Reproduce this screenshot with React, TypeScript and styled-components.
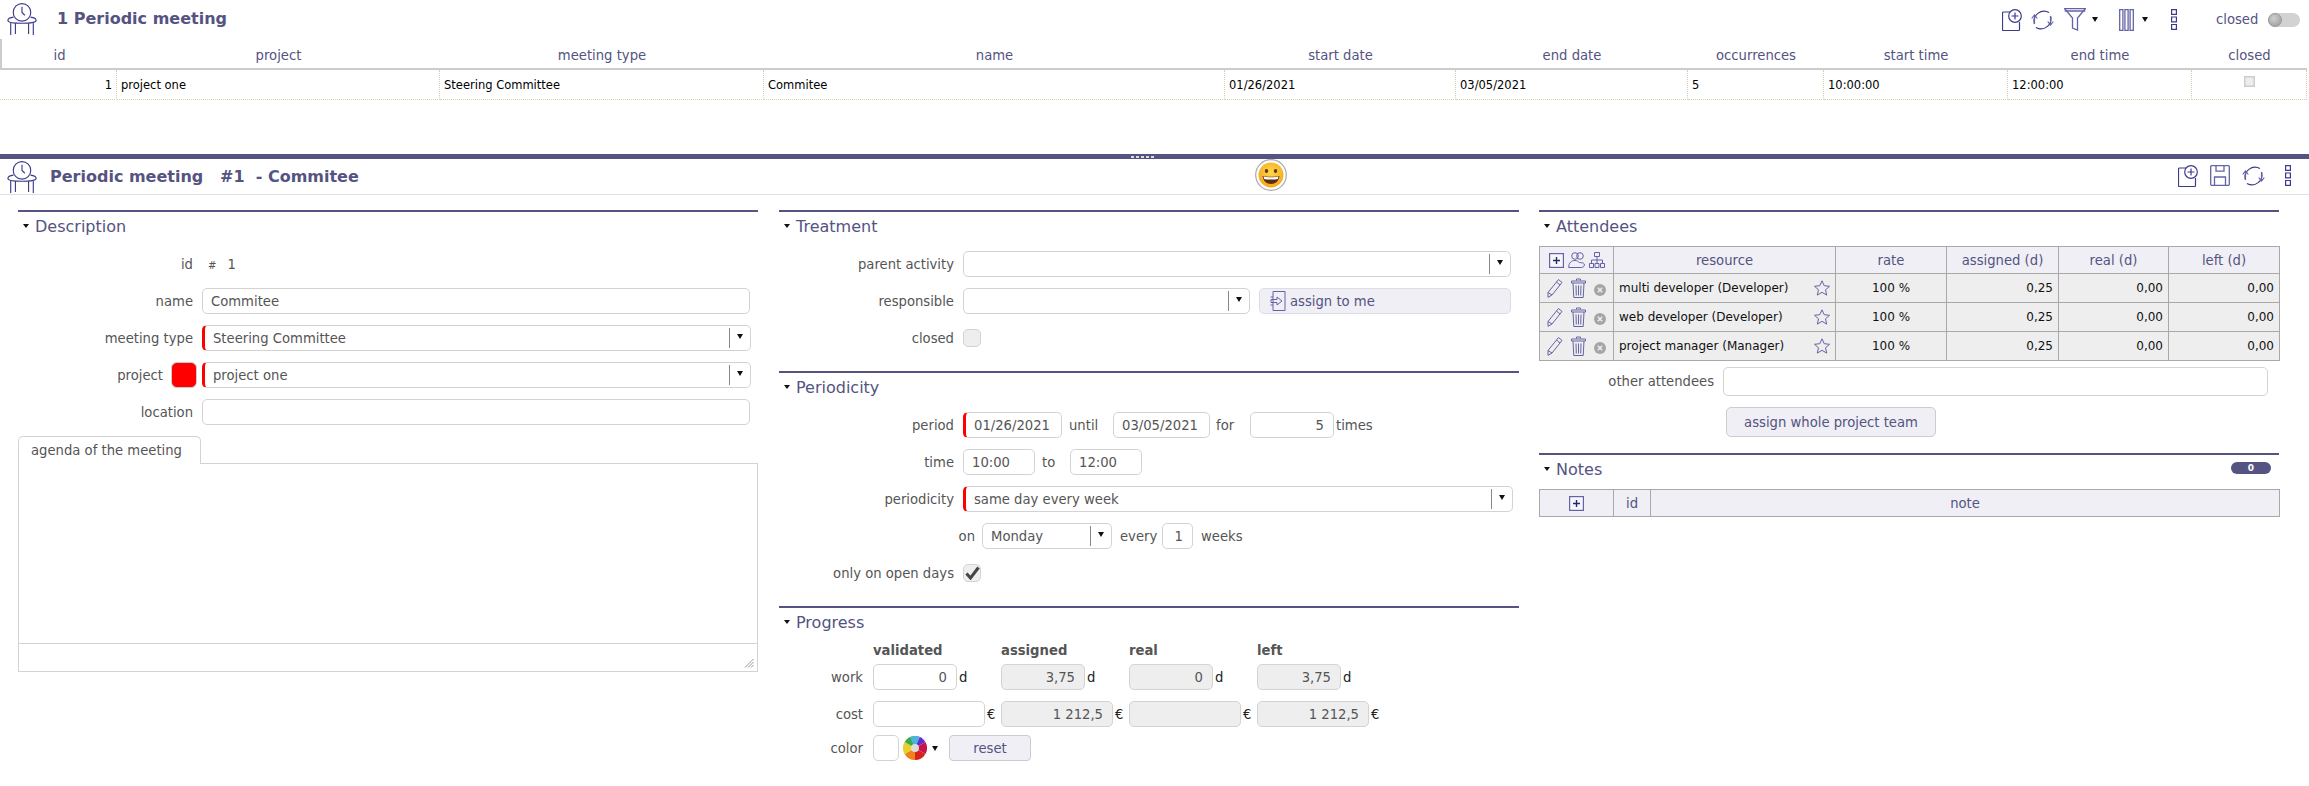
import React from "react";
import styled, { createGlobalStyle } from "styled-components";

const NAVY = "#545381";
const INK = "#3c3a8c";
const FONT = `"DejaVu Sans", Verdana, sans-serif`;
const TEXT = "13.2px";

const Global = createGlobalStyle`
  html, body { margin: 0; padding: 0; width: 2309px; height: 786px; overflow: hidden; background: #fff; }
  body { font-family: ${FONT}; font-size: ${TEXT}; color: #555; }
  * { box-sizing: border-box; }
`;

const Page = styled.div`
  width: 2309px;
  height: 786px;
  display: flex;
  flex-direction: column;
`;
const ListPane = styled.section`
  height: 154px;
  flex: none;
`;
const Splitter = styled.div`
  height: 5px;
  flex: none;
  background: ${NAVY};
  display: flex;
  justify-content: center;
  align-items: center;
  gap: 2px;
  padding-right: 25px;
`;
const SplitDot = styled.i`
  width: 3px;
  height: 2px;
  background: #ddd;
`;
const TitleBar = styled.header`
  height: 39px;
  display: flex;
  align-items: center;
`;
const ListTitle = styled.h1`
  margin: -3px 0 0 19px;
  font: bold 16px ${FONT};
  color: ${NAVY};
`;
const BrandSlot = styled.div`
  width: 38px;
  height: 39px;
  padding: 3px 0 0 6px;
  flex: none;
`;
const Tools = styled.div`
  margin-left: auto;
  display: flex;
  align-items: center;
`;
const ToolSlot = styled.span<{ $ml: number }>`
  display: flex;
  align-items: center;
  margin-left: ${(p) => p.$ml}px;
`;
const ClosedLabel = styled.span`
  width: 41px;
  margin-left: 39px;
  font-size: ${TEXT};
  color: ${NAVY};
`;
const Toggle = styled.span`
  display: block;
  width: 32px;
  height: 14px;
  margin: 0 9px 0 11px;
  border-radius: 7px;
  background: #d2d2d2;
`;
const Knob = styled.span`
  display: block;
  width: 14px;
  height: 14px;
  border-radius: 50%;
  border: 1px solid #999;
  background: radial-gradient(circle at 40% 35%, #cfcfcf, #999);
`;
const Grid = styled.table`
  border-collapse: separate;
  border-spacing: 0;
  table-layout: fixed;
  width: 2307px;
`;
const Col = styled.col<{ $w: number }>`
  width: ${(p) => p.$w}px;
`;
const GridHead = styled.th`
  height: 31px;
  padding: 4px 0 0;
  font: normal ${TEXT} ${FONT};
  color: ${NAVY};
  text-align: center;
  border-bottom: 2px solid #ccc;
  &:first-child { border-left: 2px solid #ccc; }
`;
const GridCell = styled.td<{ $right?: boolean; $center?: boolean }>`
  height: 30px;
  padding: 1px 4px 0;
  font-size: 11.5px;
  color: #000;
  text-align: ${(p) => (p.$right ? "right" : p.$center ? "center" : "left")};
  border-bottom: 1px dotted #d9cdb0;
  border-right: 1px dotted #d9cdb0;
`;
const MiniCheck = styled.span`
  display: inline-block;
  width: 11px;
  height: 11px;
  margin-bottom: 4px;
  background: #eee;
  border: 1px solid #ccc;
  box-shadow: inset 0 0 2px #bbb;
`;
const DetailPane = styled.section`
  flex: 1;
`;
const DetailBar = styled.header`
  height: 36px;
  display: grid;
  grid-template-columns: 1255px 32px 1fr;
  align-items: center;
  border-bottom: 1px solid #e0dfe8;
`;
const DetailHead = styled.div`
  display: flex;
  align-items: center;
`;
const DetailSlot = styled.div`
  width: 50px;
  height: 35px;
  flex: none;
  padding: 2px 0 0 6px;
`;
const DetailTitle = styled.h1`
  margin: 0;
  font: bold 16px ${FONT};
  color: ${NAVY};
  white-space: pre;
`;
const FaceSlot = styled.div`
  height: 32px;
  align-self: start;
`;
const DetailTools = styled.div`
  display: flex;
  justify-content: flex-end;
  align-items: center;
  padding: 0 18px 2px 0;
`;
const Columns = styled.div`
  display: grid;
  grid-template-columns: 761px 760px 740px;
  padding: 15px 0 0 18px;
  align-items: start;
`;
const Column = styled.div<{ $gap?: number }>`
  width: 740px;
  display: flex;
  flex-direction: column;
  gap: ${(p) => p.$gap ?? 20}px;
`;
const Section = styled.section`
  border-top: 2px solid ${NAVY};
`;
const SectionHead = styled.div`
  height: 28px;
  display: flex;
  align-items: center;
  padding-left: 5px;
  font-size: 16px;
  color: ${NAVY};
`;
const Caret = styled.i`
  display: block;
  width: 0;
  height: 0;
  margin-right: 6px;
  border-left: 3px solid transparent;
  border-right: 3px solid transparent;
  border-top: 4px solid #111;
`;
const BareCaret = styled.i`
  display: block;
  width: 0;
  height: 0;
  border-left: 3.5px solid transparent;
  border-right: 3.5px solid transparent;
  border-top: 5px solid #111;
`;
const Badge = styled.span`
  margin: -2px 8px 0 auto;
  width: 40px;
  height: 12px;
  border-radius: 6px;
  background: ${NAVY};
  color: #fff;
  font: bold 9px/12px ${FONT};
  text-align: center;
`;
const FormBody = styled.div`
  display: flex;
  flex-direction: column;
  gap: 11px;
  padding-top: 11px;
`;
const FormRow = styled.div`
  display: flex;
  align-items: center;
  min-height: 26px;
`;
const Label = styled.label`
  width: 175px;
  margin-right: 9px;
  flex: none;
  text-align: right;
  font-size: ${TEXT};
  color: #555;
`;
const ProjectLabel = styled(Label)`
  width: 145px;
  margin-right: 8px;
`;
const OnLabel = styled(Label)`
  width: 196px;
  margin-right: 7px;
`;
const Swatch = styled.span`
  width: 26px;
  height: 26px;
  margin-right: 5px;
  flex: none;
  background: #f00;
  border: 1px solid #ccc;
  border-radius: 6px;
`;
const Field = styled.div<{ $w?: number; $req?: boolean; $off?: boolean; $right?: boolean; $h?: number }>`
  width: ${(p) => (p.$w ? `${p.$w}px` : "auto")};
  height: ${(p) => p.$h ?? 26}px;
  flex: none;
  display: flex;
  align-items: center;
  justify-content: ${(p) => (p.$right ? "flex-end" : "flex-start")};
  padding: 0 ${(p) => (p.$right ? 9 : 8)}px;
  background: ${(p) => (p.$off ? "#eee" : "#fff")};
  border: 1px solid #d3d3d3;
  border-left: ${(p) => (p.$req ? "3px solid #f00" : "1px solid #d3d3d3")};
  border-radius: 5px;
  font-size: ${TEXT};
  color: #555;
`;
const SelectArrow = styled.span`
  margin-left: auto;
  margin-right: -8px;
  width: 21px;
  height: 20px;
  flex: none;
  display: flex;
  justify-content: center;
  padding-top: 6px;
  border-left: 1px solid #888;
`;
const Note = styled.span<{ $w?: number; $pl?: number }>`
  width: ${(p) => (p.$w ? `${p.$w}px` : "auto")};
  padding-left: ${(p) => p.$pl ?? 0}px;
  font-size: ${TEXT};
  color: #555;
  flex: none;
`;
const IdValue = styled.span`
  color: #555;
  font-size: ${TEXT};
  padding-left: 6px;
`;
const Hash = styled.span`
  font-size: 10px;
  margin-right: 11px;
`;
const CheckBox = styled.span`
  width: 18px;
  height: 18px;
  display: flex;
  align-items: center;
  justify-content: center;
  background: #eee;
  border: 1px solid #d3d3d3;
  border-radius: 5px;
`;
const AssignButton = styled.div`
  width: 252px;
  height: 26px;
  margin-left: 9px;
  padding-left: 10px;
  display: flex;
  align-items: center;
  gap: 4px;
  background: #efeff5;
  border: 1px solid #dcdce4;
  border-radius: 5px;
  color: ${NAVY};
  font-size: ${TEXT};
`;
const Tab = styled.div`
  width: 183px;
  height: 28px;
  margin-bottom: -1px;
  padding-left: 12px;
  display: flex;
  align-items: center;
  background: #fff;
  border: 1px solid #d3d3d3;
  border-bottom: none;
  border-radius: 5px 5px 0 0;
  position: relative;
  z-index: 1;
  font-size: ${TEXT};
  color: #555;
`;
const EditorBox = styled.div`
  height: 209px;
  display: flex;
  flex-direction: column;
  border: 1px solid #d3d3d3;
`;
const EditorArea = styled.div`
  flex: 1;
`;
const EditorFoot = styled.div`
  height: 28px;
  display: flex;
  align-items: flex-end;
  justify-content: flex-end;
  padding: 0 3px 3px 0;
  border-top: 1px solid #d3d3d3;
`;
const TabGroup = styled.div`
  display: flex;
  flex-direction: column;
`;
const ProgressRow = styled.div<{ $mt?: number }>`
  display: grid;
  grid-template-columns: 94px repeat(4, 128px);
  align-items: center;
  margin-top: ${(p) => p.$mt ?? 0}px;
`;
const ProgressHead = styled.b`
  font-size: ${TEXT};
  color: #555;
  height: 21px;
`;
const ProgressLabel = styled.span`
  padding-right: 10px;
  text-align: right;
  font-size: ${TEXT};
  color: #555;
`;
const Amount = styled.span`
  display: flex;
  align-items: center;
`;
const Unit = styled.span`
  margin-left: 2px;
  color: #222;
  font-size: ${TEXT};
`;
const ColorRow = styled.div`
  display: flex;
  align-items: center;
  margin-top: 8px;
`;
const ColorLabel = styled(ProgressLabel)`
  width: 94px;
`;
const ResetButton = styled.div`
  width: 82px;
  height: 26px;
  margin-left: 11px;
  display: flex;
  align-items: center;
  justify-content: center;
  background: #efeff5;
  border: 1px solid #ccc;
  border-radius: 4px;
  color: ${NAVY};
  font-size: ${TEXT};
`;
const ProgressBlock = styled.div`
  padding-top: 7px;
`;
const DataTable = styled.table`
  border-collapse: collapse;
  table-layout: fixed;
  width: 740px;
  margin-top: 6px;
`;
const DataHead = styled.th`
  height: 27px;
  padding: 0;
  background: #efeff5;
  border: 1px solid #a9a9a9;
  font: normal ${TEXT} ${FONT};
  color: ${NAVY};
`;
const DataCell = styled.td<{ $align?: string }>`
  height: 29px;
  padding: 0 5px;
  background: #eee;
  border: 1px solid #a9a9a9;
  font-size: 12px;
  color: #111;
  text-align: ${(p) => p.$align ?? "left"};
`;
const IconRow = styled.div`
  display: flex;
  align-items: center;
  justify-content: center;
  gap: 4px;
`;
const ActionRow = styled(IconRow)`
  gap: 8px;
`;
const ResourceCell = styled.div`
  display: flex;
  align-items: center;
  justify-content: space-between;
`;
const OtherButton = styled.div`
  width: 210px;
  height: 30px;
  margin: 11px 0 0 187px;
  display: flex;
  align-items: center;
  justify-content: center;
  background: #efeff5;
  border: 1px solid #ccc;
  border-radius: 5px;
  color: ${NAVY};
  font-size: ${TEXT};
`;
const OtherRow = styled(FormRow)`
  margin-top: 6px;
`;
const Glyph = styled.svg`
  display: block;
  flex: none;
  fill: none;
  stroke: ${INK};
  stroke-width: 1.2;
`;
const PaleGlyph = styled(Glyph)`
  stroke: #6463a5;
  stroke-width: 1;
`;
const HeavyGlyph = styled(PaleGlyph)`
  stroke-width: 1.3;
`;
const RemoveGlyph = styled.svg`
  display: block;
  flex: none;
  margin-top: 4px;
`;
const WheelGlyph = styled.svg`
  display: block;
  flex: none;
  margin-left: 4px;
`;

const Furniture = () => (
  <Glyph width="32" height="32" viewBox="0 0 32 34">
    <circle cx="16" cy="10" r="9.3" />
    <path d="M16 4v6l3 3" />
    <path d="M7 15C3 15.5 1 17 1 18.5 1 20.5 7 21.5 16 21.5s15-1 15-3c0-1.500-2-3-6-3.500" />
    <path d="M4 20.500V34M9 21.500V33M23 21.500V33M28 20.500V34" />
  </Glyph>
);
const NewDoc = () => (
  <Glyph width="20" height="22" viewBox="0 0 20 22">
    <path d="M8 3H1.500a1 1 0 0 0-1 1v16.500a1 1 0 0 0 1 1h15a1 1 0 0 0 1-1V13" />
    <circle cx="13" cy="7" r="6.300" fill="#fff" />
    <path d="M13 3.500v7M9.500 7h7" />
  </Glyph>
);
const Refresh = () => (
  <Glyph width="23" height="22" viewBox="0 0 23 22" strokeWidth="1.4">
    <path d="M3.500 15A10 10 0 0 1 18 3.500M19.500 7A10 10 0 0 1 5 18.500" />
    <path d="M.7 9.500L3.500 6l2.800 3.500M3.500 6v9M16.700 12.500l2.800 3.500 2.800-3.500M19.500 16V7" stroke="#6463a5" />
  </Glyph>
);
const Funnel = () => (
  <HeavyGlyph width="22" height="23" viewBox="0 0 22 23">
    <path d="M.7.700h20.600L13.500 10v12l-5-2V10zM.7 3h20.600" />
  </HeavyGlyph>
);
const ColumnsIcon = () => (
  <HeavyGlyph width="15" height="22" viewBox="0 0 15 22">
    <path d="M.7.700h3.200v20.600H.700zM5.900.700h3.200v20.600H5.900zM11.100.700h3.200v20.600h-3.200z" />
  </HeavyGlyph>
);
const Dots = () => (
  <Glyph width="6" height="21" viewBox="0 0 6 21">
    <path d="M.6.600h4.800v4.800H.6zM.6 8h4.800v4.800H.6zM.6 15.500h4.800v4.800H.6z" />
  </Glyph>
);
const SaveIcon = () => (
  <HeavyGlyph width="20" height="21" viewBox="0 0 20 21">
    <path d="M1.700.700h16.600a1 1 0 0 1 1 1v17.600a1 1 0 0 1-1 1H1.700a1 1 0 0 1-1-1V1.700a1 1 0 0 1 1-1z" />
    <path d="M6 .7v5.500h8V.700M4.500 20v-8h11v8" />
  </HeavyGlyph>
);
const Smiley = () => (
  <svg width="32" height="32" viewBox="0 0 32 32">
    <defs>
      <radialGradient id="face" cx="50%" cy="40%" r="60%">
        <stop offset="0%" stopColor="#ffd84a" />
        <stop offset="100%" stopColor="#f5a81c" />
      </radialGradient>
    </defs>
    <circle cx="16" cy="16" r="15.300" fill="#fff" stroke="#aaa" strokeWidth="1.200" />
    <circle cx="16" cy="16" r="12.500" fill="url(#face)" />
    <ellipse cx="11.500" cy="12" rx="1.700" ry="1.900" fill="#5b3a12" />
    <ellipse cx="20.500" cy="12" rx="1.700" ry="1.900" fill="#5b3a12" />
    <path d="M7.500 17c3 1 14 1 17 0-.6 5-4 8-8.500 8s-7.900-3-8.500-8z" fill="#5d2c0d" />
    <path d="M8.500 17.500c3 .9 12 .9 15 0l-.5 2.500c-3 .8-11 .8-14 0z" fill="#fff" />
  </svg>
);
const AssignGlyph = () => (
  <PaleGlyph width="16" height="20" viewBox="0 0 16 20">
    <path d="M3 .5h12v19H3zM3 6H.5M3 14H.5" />
    <path d="M1 8.500h6V6l5 4-5 4v-2.500H1z" />
  </PaleGlyph>
);
const Check = () => (
  <svg width="15" height="14" viewBox="0 0 15 14">
    <path d="M1.500 7.500l4 4.500L13.500 1.500" fill="none" stroke="#444" strokeWidth="3" />
  </svg>
);
const PlusBox = () => (
  <Glyph width="15" height="15" viewBox="0 0 15 15">
    <rect x=".6" y=".6" width="13.800" height="13.800" fill="#f7f7fb" stroke="#6463a5" />
    <path d="M7.500 4v7M4 7.500h7" stroke="#222a6e" strokeWidth="1.400" />
  </Glyph>
);
const People = () => (
  <PaleGlyph width="17" height="16" viewBox="0 0 17 16">
    <circle cx="7" cy="4" r="3.300" />
    <circle cx="12" cy="4" r="3.300" />
    <path d="M.7 15.500c0-5 3-7 6.300-7 2 0 3 1 4.500 2 2 .5 4 0 4.800 1.500.4 2-1 3.500-3 3.500z" />
  </PaleGlyph>
);
const Hierarchy = () => (
  <PaleGlyph width="16" height="16" viewBox="0 0 16 16">
    <path d="M5.500.5h5v4h-5zM.5 11.500h4v4h-4zM6 11.500h4v4H6zM11.500 11.500h4v4h-4zM8 4.500v7M2.500 11.500V8h11v3.500" />
  </PaleGlyph>
);
const PencilIcon = () => (
  <PaleGlyph width="16" height="20" viewBox="0 0 16 20">
    <path d="M11.500 1.500l3.500 3L5 17l-4 2.300L1 14.500zM9.500 4l3.500 3M1 14.500l4 2.500" />
  </PaleGlyph>
);
const TrashIcon = () => (
  <PaleGlyph width="15" height="20" viewBox="0 0 15 20">
    <path d="M5.500 2.500V1h4v1.500M.5 3h14v2H.5zM2 5l.8 14.500h9.400L13 5M5 7.500l.3 10M7.500 7.500v10M10 7.500l-.3 10" />
  </PaleGlyph>
);
const RemoveIcon = () => (
  <RemoveGlyph width="12" height="12" viewBox="0 0 12 12">
    <circle cx="6" cy="6" r="6" fill="#a5a5a5" />
    <path d="M3.800 3.800l4.400 4.400M8.200 3.800l-4.400 4.400" stroke="#eee" strokeWidth="1.500" />
  </RemoveGlyph>
);
const StarIcon = () => (
  <PaleGlyph width="16" height="16" viewBox="0 0 16 16">
    <path d="M8 .8l2.200 4.900 5.300.6-4 3.500 1.200 5.300L8 12.300l-4.700 2.800 1.200-5.300-4-3.500 5.300-.6z" />
  </PaleGlyph>
);
const Grip = () => (
  <svg width="10" height="10" viewBox="0 0 10 10">
    <path d="M9.500 1L1 9.500M9.500 4L4 9.500M9.500 7L7 9.500" stroke="#999" strokeWidth="1" />
  </svg>
);
const ColorWheel = () => (
  <WheelGlyph width="24" height="24" viewBox="0 0 24 24">
    <path d="M12 12L12 0A12 12 0 0 1 22.400 6z" fill="#6a2bd0" />
    <path d="M12 12L22.400 6A12 12 0 0 1 22.400 18z" fill="#c6144c" />
    <path d="M12 12L22.400 18A12 12 0 0 1 12 24z" fill="#d9221c" />
    <path d="M12 12L12 24A12 12 0 0 1 1.600 18z" fill="#f0821e" />
    <path d="M12 12L1.600 18A12 12 0 0 1 1.600 6z" fill="#e8cf2a" />
    <path d="M12 12L1.600 6A12 12 0 0 1 12 0z" fill="#3fa84a" />
    <path d="M12 0A12 12 0 0 1 17 1L12 12 7 1A12 12 0 0 1 12 0z" fill="#4fb4dc" />
    <circle cx="12" cy="12" r="4" fill="#ddd" />
  </WheelGlyph>
);
const CaretSlot = styled.span<{ $ml: number }>`
  display: block;
  margin-left: ${(p) => p.$ml}px;
`;

const listWidths = [117, 323, 324, 461, 231, 232, 136, 184, 184, 115];
const listHeads = ["id", "project", "meeting type", "name", "start date", "end date", "occurrences", "start time", "end time", "closed"];
const listRow = ["project one", "Steering Committee", "Commitee", "01/26/2021", "03/05/2021", "5", "10:00:00", "12:00:00"];
const attendees = ["multi developer (Developer)", "web developer (Developer)", "project manager (Manager)"];

const Select = ({ w, req, value }: { w: number; req?: boolean; value?: string }) => (
  <Field $w={w} $req={req}>
    {value}
    <SelectArrow>
      <BareCaret />
    </SelectArrow>
  </Field>
);

export default function App() {
  return (
    <Page>
      <Global />
      <ListPane>
        <TitleBar>
          <BrandSlot><Furniture /></BrandSlot>
          <ListTitle>1 Periodic meeting</ListTitle>
          <Tools>
            <NewDoc />
            <ToolSlot $ml={9}><Refresh /></ToolSlot>
            <ToolSlot $ml={10}><Funnel /></ToolSlot>
            <CaretSlot $ml={6}><BareCaret /></CaretSlot>
            <ToolSlot $ml={21}><ColumnsIcon /></ToolSlot>
            <CaretSlot $ml={8}><BareCaret /></CaretSlot>
            <ToolSlot $ml={23}><Dots /></ToolSlot>
            <ClosedLabel>closed</ClosedLabel>
            <Toggle><Knob /></Toggle>
          </Tools>
        </TitleBar>
        <Grid>
          <colgroup>{listWidths.map((w, i) => <Col key={i} $w={w} />)}</colgroup>
          <thead>
            <tr>{listHeads.map((h) => <GridHead key={h}>{h}</GridHead>)}</tr>
          </thead>
          <tbody>
            <tr>
              <GridCell $right>1</GridCell>
              {listRow.map((c) => <GridCell key={c}>{c}</GridCell>)}
              <GridCell $center><MiniCheck /></GridCell>
            </tr>
          </tbody>
        </Grid>
      </ListPane>
      <Splitter>
        {[0, 1, 2, 3, 4].map((i) => <SplitDot key={i} />)}
      </Splitter>
      <DetailPane>
        <DetailBar>
          <DetailHead>
            <DetailSlot><Furniture /></DetailSlot>
            <DetailTitle>{"Periodic meeting   #1  - Commitee"}</DetailTitle>
          </DetailHead>
          <FaceSlot><Smiley /></FaceSlot>
          <DetailTools>
            <NewDoc />
            <ToolSlot $ml={12}><SaveIcon /></ToolSlot>
            <ToolSlot $ml={12}><Refresh /></ToolSlot>
            <ToolSlot $ml={20}><Dots /></ToolSlot>
          </DetailTools>
        </DetailBar>
        <Columns>
          <Column>
            <Section>
              <SectionHead><Caret />Description</SectionHead>
              <FormBody>
                <FormRow>
                  <Label>id</Label>
                  <IdValue><Hash>#</Hash>1</IdValue>
                </FormRow>
                <FormRow>
                  <Label>name</Label>
                  <Field $w={548}>Commitee</Field>
                </FormRow>
                <FormRow>
                  <Label>meeting type</Label>
                  <Select w={549} req value="Steering Committee" />
                </FormRow>
                <FormRow>
                  <ProjectLabel>project</ProjectLabel>
                  <Swatch />
                  <Select w={549} req value="project one" />
                </FormRow>
                <FormRow>
                  <Label>location</Label>
                  <Field $w={548} />
                </FormRow>
                <TabGroup>
                  <Tab>agenda of the meeting</Tab>
                  <EditorBox>
                    <EditorArea />
                    <EditorFoot><Grip /></EditorFoot>
                  </EditorBox>
                </TabGroup>
              </FormBody>
            </Section>
          </Column>
          <Column>
            <Section>
              <SectionHead><Caret />Treatment</SectionHead>
              <FormBody>
                <FormRow>
                  <Label>parent activity</Label>
                  <Select w={548} />
                </FormRow>
                <FormRow>
                  <Label>responsible</Label>
                  <Select w={287} />
                  <AssignButton><AssignGlyph />assign to me</AssignButton>
                </FormRow>
                <FormRow>
                  <Label>closed</Label>
                  <CheckBox />
                </FormRow>
              </FormBody>
            </Section>
            <Section>
              <SectionHead><Caret />Periodicity</SectionHead>
              <FormBody>
                <FormRow>
                  <Label>period</Label>
                  <Field $w={99} $req>01/26/2021</Field>
                  <Note $w={51} $pl={7}>until</Note>
                  <Field $w={97}>03/05/2021</Field>
                  <Note $w={40} $pl={6}>for</Note>
                  <Field $w={84} $right>5</Field>
                  <Note $pl={2}>times</Note>
                </FormRow>
                <FormRow>
                  <Label>time</Label>
                  <Field $w={72}>10:00</Field>
                  <Note $w={35} $pl={7}>to</Note>
                  <Field $w={72}>12:00</Field>
                </FormRow>
                <FormRow>
                  <Label>periodicity</Label>
                  <Select w={550} req value="same day every week" />
                </FormRow>
                <FormRow>
                  <OnLabel>on</OnLabel>
                  <Select w={130} value="Monday" />
                  <Note $w={50} $pl={8}>every</Note>
                  <Field $w={31} $right>1</Field>
                  <Note $pl={8}>weeks</Note>
                </FormRow>
                <FormRow>
                  <Label>only on open days</Label>
                  <CheckBox><Check /></CheckBox>
                </FormRow>
              </FormBody>
            </Section>
            <Section>
              <SectionHead><Caret />Progress</SectionHead>
              <ProgressBlock>
                <ProgressRow>
                  <span />
                  <ProgressHead>validated</ProgressHead>
                  <ProgressHead>assigned</ProgressHead>
                  <ProgressHead>real</ProgressHead>
                  <ProgressHead>left</ProgressHead>
                </ProgressRow>
                <ProgressRow>
                  <ProgressLabel>work</ProgressLabel>
                  <Amount><Field $w={84} $right>0</Field><Unit>d</Unit></Amount>
                  <Amount><Field $w={84} $right $off>3,75</Field><Unit>d</Unit></Amount>
                  <Amount><Field $w={84} $right $off>0</Field><Unit>d</Unit></Amount>
                  <Amount><Field $w={84} $right $off>3,75</Field><Unit>d</Unit></Amount>
                </ProgressRow>
                <ProgressRow $mt={11}>
                  <ProgressLabel>cost</ProgressLabel>
                  <Amount><Field $w={112} $right /><Unit>€</Unit></Amount>
                  <Amount><Field $w={112} $right $off>1 212,5</Field><Unit>€</Unit></Amount>
                  <Amount><Field $w={112} $right $off /><Unit>€</Unit></Amount>
                  <Amount><Field $w={112} $right $off>1 212,5</Field><Unit>€</Unit></Amount>
                </ProgressRow>
                <ColorRow>
                  <ColorLabel>color</ColorLabel>
                  <Field $w={26} />
                  <ColorWheel />
                  <CaretSlot $ml={5}><BareCaret /></CaretSlot>
                  <ResetButton>reset</ResetButton>
                </ColorRow>
              </ProgressBlock>
            </Section>
          </Column>
          <Column $gap={16}>
            <Section>
              <SectionHead><Caret />Attendees</SectionHead>
              <DataTable>
                <colgroup>
                  {[74, 222, 111, 112, 110, 111].map((w, i) => <Col key={i} $w={w} />)}
                </colgroup>
                <thead>
                  <tr>
                    <DataHead><IconRow><PlusBox /><People /><Hierarchy /></IconRow></DataHead>
                    <DataHead>resource</DataHead>
                    <DataHead>rate</DataHead>
                    <DataHead>assigned (d)</DataHead>
                    <DataHead>real (d)</DataHead>
                    <DataHead>left (d)</DataHead>
                  </tr>
                </thead>
                <tbody>
                  {attendees.map((a) => (
                    <tr key={a}>
                      <DataCell><ActionRow><PencilIcon /><TrashIcon /><RemoveIcon /></ActionRow></DataCell>
                      <DataCell>
                        <ResourceCell>{a}<StarIcon /></ResourceCell>
                      </DataCell>
                      <DataCell $align="center">100 %</DataCell>
                      <DataCell $align="right">0,25</DataCell>
                      <DataCell $align="right">0,00</DataCell>
                      <DataCell $align="right">0,00</DataCell>
                    </tr>
                  ))}
                </tbody>
              </DataTable>
              <OtherRow>
                <Label>other attendees</Label>
                <Field $w={545} $h={29} />
              </OtherRow>
              <OtherButton>assign whole project team</OtherButton>
            </Section>
            <Section>
              <SectionHead><Caret />Notes<Badge>0</Badge></SectionHead>
              <DataTable>
                <colgroup>
                  {[74, 37, 629].map((w, i) => <Col key={i} $w={w} />)}
                </colgroup>
                <thead>
                  <tr>
                    <DataHead><IconRow><PlusBox /></IconRow></DataHead>
                    <DataHead>id</DataHead>
                    <DataHead>note</DataHead>
                  </tr>
                </thead>
              </DataTable>
            </Section>
          </Column>
        </Columns>
      </DetailPane>
    </Page>
  );
}
